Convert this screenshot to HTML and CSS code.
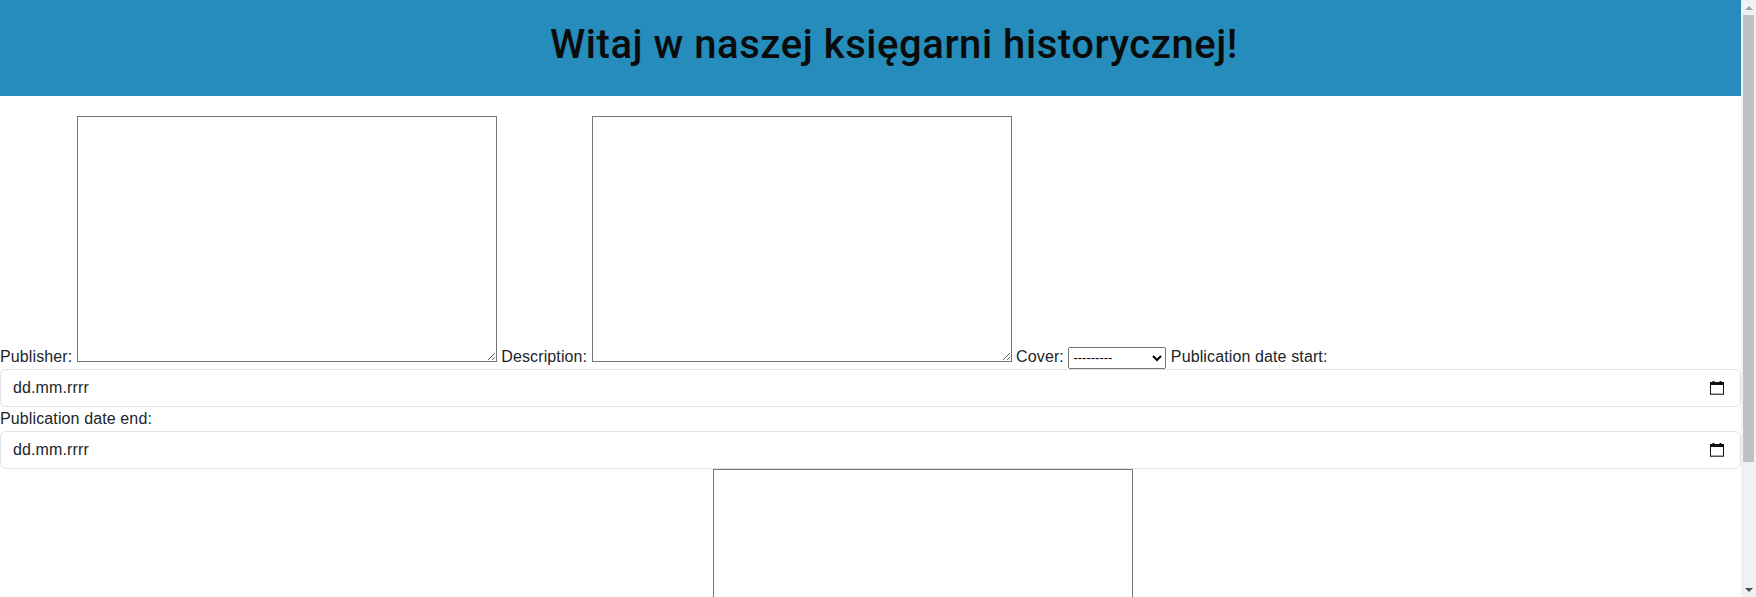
FILE: index.html
```html
<!DOCTYPE html>
<html lang="pl">
<head>
<meta charset="utf-8">
<title>Księgarnia historyczna</title>
<link rel="stylesheet" href="styles.css">
</head>
<body>
<div class="page">
  <header class="site-header">
    <h1 class="site-title">Witaj w naszej księgarni historycznej!</h1>
  </header>
  <form class="search-form">
    <div class="inline-row">
      <label class="field-label">Publisher:</label>
      <textarea class="area"></textarea>
      <label class="field-label">Description:</label>
      <textarea class="area"></textarea>
      <label class="field-label">Cover:</label>
      <select class="cover-select"><option>---------</option></select>
      <label class="field-label">Publication date start:</label>
    </div>
    <div class="date-field">
      <span class="date-text">dd.mm.rrrr</span>
      <svg class="cal-icon" width="14" height="14" viewBox="0 0 14 14" aria-hidden="true">
        <rect x="2.5" y="0" width="2" height="3" fill="#111"/>
        <rect x="9.5" y="0" width="2" height="3" fill="#111"/>
        <rect x="0.5" y="1.5" width="13" height="12" fill="#fff" stroke="#111" stroke-width="1"/>
        <rect x="0" y="1" width="14" height="3" fill="#111"/>
        <rect x="0.5" y="12.5" width="13" height="1.5" fill="#555"/>
      </svg>
    </div>
    <label class="block-label">Publication date end:</label>
    <div class="date-field">
      <span class="date-text">dd.mm.rrrr</span>
      <svg class="cal-icon" width="14" height="14" viewBox="0 0 14 14" aria-hidden="true">
        <rect x="2.5" y="0" width="2" height="3" fill="#111"/>
        <rect x="9.5" y="0" width="2" height="3" fill="#111"/>
        <rect x="0.5" y="1.5" width="13" height="12" fill="#fff" stroke="#111" stroke-width="1"/>
        <rect x="0" y="1" width="14" height="3" fill="#111"/>
        <rect x="0.5" y="12.5" width="13" height="1.5" fill="#555"/>
      </svg>
    </div>
    <div class="bottom-row">
      <textarea class="area"></textarea>
    </div>
  </form>
</div>
<div class="scrollbar" aria-hidden="true">
  <div class="sb-button"><span class="sb-arrow-up"></span></div>
  <div class="sb-track"><div class="sb-thumb"></div></div>
  <div class="sb-button"><span class="sb-arrow-down"></span></div>
</div>
</body>
</html>
```
FILE: styles.css
```css
html, body {
  margin: 0;
  padding: 0;
  overflow: hidden;
}

body {
  display: flex;
  height: 100vh;
  font-family: "Liberation Sans", Arial, sans-serif;
  font-size: 16px;
  line-height: 1.5;
  color: #212529;
  background: #fff;
}

.page {
  flex: 1;
  min-width: 0;
  height: 100%;
  overflow: hidden;
}

.site-header {
  background: #258cbb;
  height: 96px;
  box-sizing: border-box;
  padding-top: 21px;
}

.site-title {
  margin: 0;
  padding-left: 47px;
  font-family: Roboto, "Liberation Sans", sans-serif;
  font-size: 40px;
  line-height: 48px;
  font-weight: 500;
  letter-spacing: 0.55px;
  text-align: center;
  color: #0b0b0b;
}

.search-form {
  padding-top: 20px;
  padding-bottom: 36px;
}

.inline-row {
  line-height: 24px;
}

.field-label,
.block-label,
.date-text {
  letter-spacing: 0.12px;
}

.area {
  margin: 0;
  width: 420px;
  height: 246px;
  box-sizing: border-box;
  border: 1px solid #767676;
  padding: 2px;
  font-family: "Liberation Mono", monospace;
  font-size: 13px;
  background: #fff;
}

.cover-select {
  margin: 0;
  width: 98px;
  height: 22px;
  font-family: "Liberation Sans", Arial, sans-serif;
  font-size: 13px;
  color: #000;
}

.date-field {
  display: flex;
  align-items: center;
  justify-content: space-between;
  height: 38px;
  box-sizing: border-box;
  padding: 0 16px 0 12px;
  border: 1px solid #dee2e6;
  border-radius: 6px;
  background: #fff;
}

.date-text {
  color: #212529;
}

.cal-icon {
  display: block;
  width: 14px;
  height: 14px;
}

.block-label {
  display: block;
  line-height: 24px;
}

.bottom-row {
  padding-left: 713px;
  line-height: 24px;
}

.scrollbar {
  flex: 0 0 15px;
  width: 15px;
  height: 100%;
  display: flex;
  flex-direction: column;
  background: #f1f1f1;
}

.sb-button {
  flex: 0 0 15px;
  display: flex;
  align-items: center;
  justify-content: center;
}

.sb-arrow-up {
  width: 0;
  height: 0;
  border-left: 4px solid transparent;
  border-right: 4px solid transparent;
  border-bottom: 4px solid #a3a3a3;
}

.sb-arrow-down {
  width: 0;
  height: 0;
  border-left: 4px solid transparent;
  border-right: 4px solid transparent;
  border-top: 4px solid #505050;
}

.sb-track {
  flex: 1;
  padding: 0 2px;
}

.sb-thumb {
  height: 447px;
  background: #c1c1c1;
}
```
